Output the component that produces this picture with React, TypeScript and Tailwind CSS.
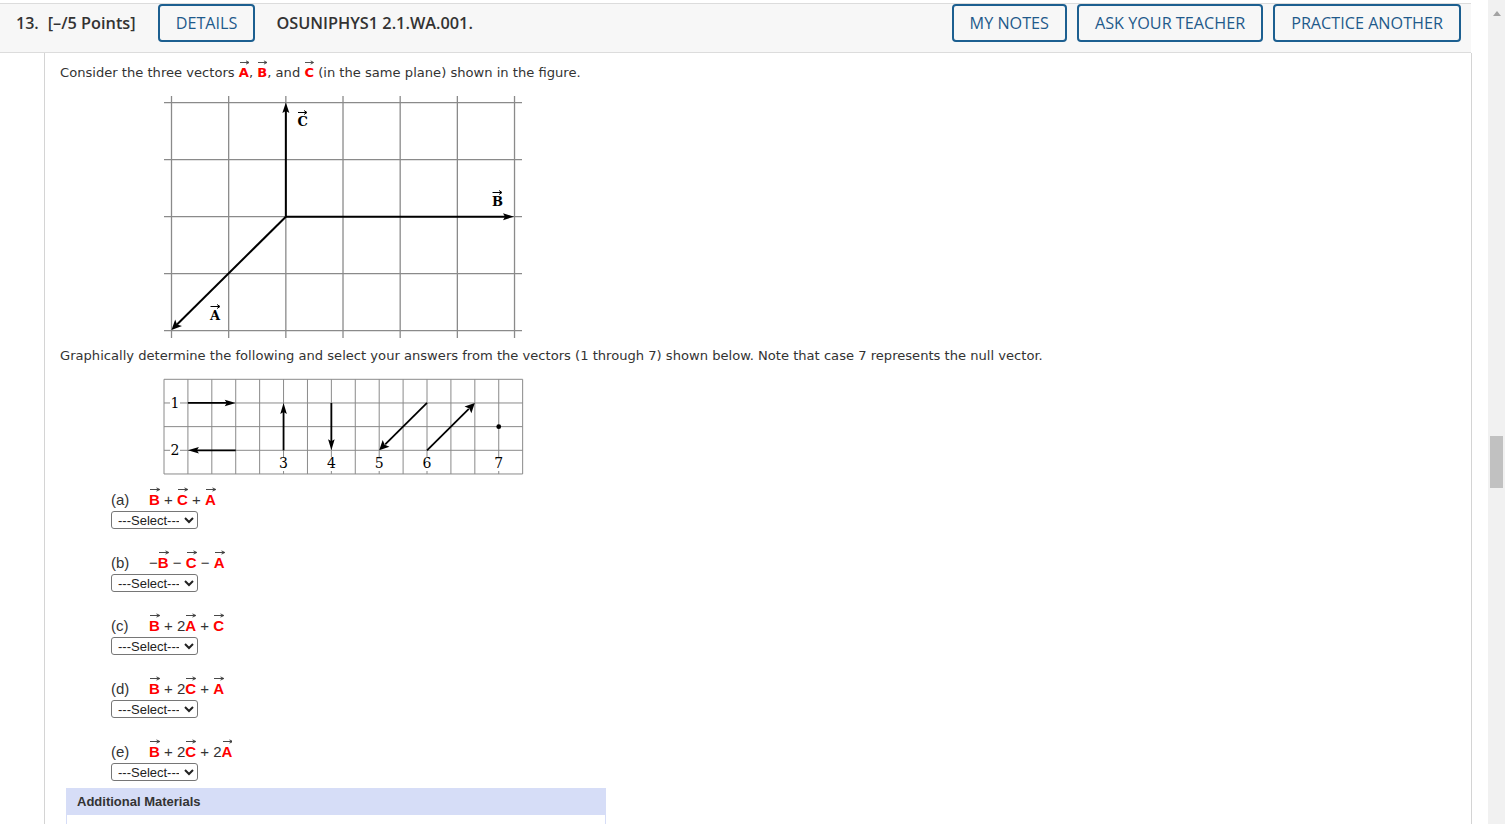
import React from 'react';

const RED = 'text-[#ff0000]';

// Letter with a small arrow over it (vector notation)
const Vec: React.FC<{ l: string }> = ({ l }) => (
    <span className={`relative inline-block font-bold ${RED}`}>
        {l}
        <svg className="absolute left-[1px] top-[-4px] h-[5px] w-[calc(100%-1px)]" viewBox="0 0 10 5" preserveAspectRatio="none">
            <line x1="0" y1="2.5" x2="9.2" y2="2.5" stroke="#333" strokeWidth="0.9" />
            <path d="M6.6 0.9 L10 2.5 L6.6 4.1" fill="none" stroke="#333" strokeWidth="0.9" />
        </svg>
    </span>
);

const HeaderButton: React.FC<{ label: string }> = ({ label }) => (
    <button className="h-[38px] rounded-[4px] border-2 border-[#1c5f90] bg-[#f7f7f7] px-4 text-[16.2px] leading-none text-[#1f5a8b]">
        {label}
    </button>
);

// Figure 1: grid with vectors A, B, C
const VectorFigure: React.FC = () => {
    const xs = [0, 1, 2, 3, 4, 5, 6].map((i) => 11.5 + i * 57.17);
    const ys = [0, 1, 2, 3, 4].map((i) => 8.7 + i * 57);
    const ox = xs[2];
    const oy = ys[2];
    return (
        <svg width="365" height="246" viewBox="0 0 365 246" className="ml-[100px] mt-[12px] block">
            {xs.map((x) => (
                <line key={'v' + x} x1={x} y1="2" x2={x} y2="244" stroke="#8a8a8a" strokeWidth="1.3" />
            ))}
            {ys.map((y) => (
                <line key={'h' + y} x1="4" y1={y} x2="362" y2={y} stroke="#8a8a8a" strokeWidth="1.3" />
            ))}
            {/* C */}
            <line x1={ox} y1={oy} x2={ox} y2="16" stroke="#000" strokeWidth="2" />
            <path d={`M${ox} 8.5 L${ox - 3.5} 19 L${ox} 17 L${ox + 3.5} 19 Z`} fill="#000" />
            {/* B */}
            <line x1={ox} y1={oy} x2="346" y2={oy} stroke="#000" strokeWidth="2" />
            <path d={`M354 ${oy} L343 ${oy - 3.5} L345 ${oy} L343 ${oy + 3.5} Z`} fill="#000" />
            {/* A */}
            <line x1={ox} y1={oy} x2="17" y2="230.5" stroke="#000" strokeWidth="2" />
            <path d="M11.5 236 L15.2 225.4 L17 230.5 L22 232.1 Z" fill="#000" />
            {/* labels */}
            <g fontFamily="'DejaVu Serif', 'Liberation Serif', serif" fontWeight="bold" fontSize="13" fill="#000">
                <text x="137.5" y="32">C</text>
                <line x1="138" y1="18.5" x2="146" y2="18.5" stroke="#000" strokeWidth="1" />
                <path d="M144 16.5 L147 18.5 L144 20.5" fill="none" stroke="#000" strokeWidth="1" />
                <text x="332" y="112">B</text>
                <line x1="332.5" y1="98.5" x2="341" y2="98.5" stroke="#000" strokeWidth="1" />
                <path d="M339 96.5 L342 98.5 L339 100.5" fill="none" stroke="#000" strokeWidth="1" />
                <text x="50" y="226">A</text>
                <line x1="50.5" y1="212.5" x2="59" y2="212.5" stroke="#000" strokeWidth="1" />
                <path d="M57 210.5 L60 212.5 L57 214.5" fill="none" stroke="#000" strokeWidth="1" />
            </g>
        </svg>
    );
};

// Figure 2: candidate vectors 1 through 7
const ChoicesFigure: React.FC = () => {
    const cw = 23.91;
    const ch = 23.67;
    const x0 = 4;
    const y0 = 3.3;
    const X = (c: number) => x0 + c * cw;
    const Y = (r: number) => y0 + r * ch;
    const cols = Array.from({ length: 16 }, (_, i) => X(i));
    const rows = Array.from({ length: 5 }, (_, i) => Y(i));
    const labels: [string, number, number][] = [
        ['3', X(5), 92],
        ['4', X(7), 92],
        ['5', X(9), 92],
        ['6', X(11), 92],
        ['7', X(14), 92],
    ];
    return (
        <svg width="366" height="102" viewBox="0 0 366 102" className="ml-[100px] mt-[11px] block">
            {cols.map((x) => (
                <line key={'c' + x} x1={x} y1={Y(0)} x2={x} y2={Y(4)} stroke="#8a8a8a" strokeWidth="1" />
            ))}
            {rows.map((y) => (
                <line key={'r' + y} x1={X(0)} y1={y} x2={X(15)} y2={y} stroke="#8a8a8a" strokeWidth="1" />
            ))}
            <g stroke="#000" strokeWidth="1.8">
                <line x1={X(1)} y1={Y(1)} x2={X(3) - 8} y2={Y(1)} />
                <line x1={X(3)} y1={Y(3)} x2={X(1) + 8} y2={Y(3)} />
                <line x1={X(5)} y1={Y(3)} x2={X(5)} y2={Y(1) + 8} />
                <line x1={X(7)} y1={Y(1)} x2={X(7)} y2={Y(3) - 8} />
                <line x1={X(11)} y1={Y(1)} x2={X(9) + 6} y2={Y(3) - 6} />
                <line x1={X(11)} y1={Y(3)} x2={X(13) - 6} y2={Y(1) + 6} />
            </g>
            <g fill="#000">
                <path d={`M${X(3)} ${Y(1)} L${X(3) - 11} ${Y(1) - 3.3} L${X(3) - 9} ${Y(1)} L${X(3) - 11} ${Y(1) + 3.3} Z`} />
                <path d={`M${X(1)} ${Y(3)} L${X(1) + 11} ${Y(3) - 3.3} L${X(1) + 9} ${Y(3)} L${X(1) + 11} ${Y(3) + 3.3} Z`} />
                <path d={`M${X(5)} ${Y(1)} L${X(5) - 3.3} ${Y(1) + 11} L${X(5)} ${Y(1) + 9} L${X(5) + 3.3} ${Y(1) + 11} Z`} />
                <path d={`M${X(7)} ${Y(3)} L${X(7) - 3.3} ${Y(3) - 11} L${X(7)} ${Y(3) - 9} L${X(7) + 3.3} ${Y(3) - 11} Z`} />
                <path d={`M${X(9)} ${Y(3)} L${X(9) + 3.5} ${Y(3) - 10.3} L${X(9) + 5.5} ${Y(3) - 5.5} L${X(9) + 10.3} ${Y(3) - 3.5} Z`} />
                <path d={`M${X(13)} ${Y(1)} L${X(13) - 3.5} ${Y(1) + 10.3} L${X(13) - 5.5} ${Y(1) + 5.5} L${X(13) - 10.3} ${Y(1) + 3.5} Z`} />
                <circle cx={X(14)} cy={Y(2)} r="2.4" />
            </g>
            <g fontFamily="'DejaVu Serif', 'Liberation Serif', serif" fontSize="14" fill="#000" textAnchor="middle">
                <rect x="10" y={Y(1) - 7} width="10" height="14" fill="#fff" />
                <text x="15" y={Y(1) + 5}>1</text>
                <rect x="10" y={Y(3) - 7} width="10" height="14" fill="#fff" />
                <text x="15" y={Y(3) + 5}>2</text>
                {labels.map(([t, x, y]) => (
                    <g key={t}>
                        <rect x={x - 5} y={y - 11} width="10" height="14" fill="#fff" />
                        <text x={x} y={y}>{t}</text>
                    </g>
                ))}
            </g>
        </svg>
    );
};

const Question: React.FC<{ tag: string; children: React.ReactNode }> = ({ tag, children }) => (
    <div className="mb-[25px]">
        <div className="flex h-[18px] items-center text-[15px] leading-[18px] text-[#333]">
            <span className="w-[38px]">({tag})</span>
            <span className="whitespace-pre">{children}</span>
        </div>
        <select
            defaultValue=""
            className="mt-[2px] block h-[18px] w-[87px] rounded-[3px] border border-[#767676] bg-white px-[2px] text-[13px] leading-none text-[#222]"
        >
            <option value="">---Select---</option>
            {[1, 2, 3, 4, 5, 6, 7].map((n) => (
                <option key={n} value={n}>{n}</option>
            ))}
        </select>
    </div>
);

export default function App() {
    return (
        <div className="flex h-[824px] w-full overflow-hidden bg-white" style={{ fontFamily: "'Liberation Sans', Arial, sans-serif" }}>
            <div className="flex min-w-0 flex-1 flex-col">
                {/* Question header */}
                <header
                    className="mr-[17px] mt-[3px] flex items-center border-y border-[#dcdcdc] bg-[#f7f7f7] pb-[10px] pl-4 pr-[10px] text-[#333]"
                    style={{ fontFamily: "'Open Sans', sans-serif" }}
                >
                    <span className="text-[16px] font-semibold">13.</span>
                    <span className="ml-[9px] text-[16.3px] font-semibold">[–/5 Points]</span>
                    <div className="ml-[22px]">
                        <HeaderButton label="DETAILS" />
                    </div>
                    <span className="ml-[21px] text-[16.3px] font-semibold">OSUNIPHYS1 2.1.WA.001.</span>
                    <div className="ml-auto flex gap-[10px]">
                        <HeaderButton label="MY NOTES" />
                        <HeaderButton label="ASK YOUR TEACHER" />
                        <HeaderButton label="PRACTICE ANOTHER" />
                    </div>
                </header>

                {/* Question body */}
                <main className="ml-[44px] mr-[16px] flex-1 border-x border-[#d4d4d4] pl-[15px] pt-[11px]">
                    <p className="text-[13.1px] leading-[18px] text-[#333]" style={{ fontFamily: "'DejaVu Sans', Verdana, sans-serif" }}>
                        Consider the three vectors <Vec l="A" />, <Vec l="B" />, and <Vec l="C" /> (in the same plane) shown in the figure.
                    </p>
                    <VectorFigure />
                    <p className="mt-[7px] text-[13.1px] leading-[18px] text-[#333]" style={{ fontFamily: "'DejaVu Sans', Verdana, sans-serif" }}>
                        Graphically determine the following and select your answers from the vectors (1 through 7) shown below. Note that case 7 represents the null vector.
                    </p>
                    <ChoicesFigure />

                    <div className="ml-[51px] mt-[13px]">
                        <Question tag="a">
                            <Vec l="B" /> + <Vec l="C" /> + <Vec l="A" />
                        </Question>
                        <Question tag="b">
                            −<Vec l="B" /> − <Vec l="C" /> − <Vec l="A" />
                        </Question>
                        <Question tag="c">
                            <Vec l="B" /> + 2<Vec l="A" /> + <Vec l="C" />
                        </Question>
                        <Question tag="d">
                            <Vec l="B" /> + 2<Vec l="C" /> + <Vec l="A" />
                        </Question>
                        <Question tag="e">
                            <Vec l="B" /> + 2<Vec l="C" /> + 2<Vec l="A" />
                        </Question>
                    </div>

                    <section className="-mt-[18px] ml-[6px] w-[540px] border-x border-[#d6ddf7]">
                        <div className="h-[27px] bg-[#d6ddf7] pl-[10px] text-[13px] font-bold leading-[27px] text-[#333]">
                            Additional Materials
                        </div>
                        <div className="h-[40px] bg-white" />
                    </section>
                </main>
            </div>

            {/* Scrollbar */}
            <div className="flex w-[17px] flex-col items-center bg-[#f1f1f1]">
                <svg width="8" height="5" viewBox="0 0 8 5" className="mt-[11px]">
                    <path d="M0 5 L4 0 L8 5 Z" fill="#a3a3a3" />
                </svg>
                <div className="mt-[420px] h-[52px] w-[13px] bg-[#c1c1c1]" />
            </div>
        </div>
    );
}
